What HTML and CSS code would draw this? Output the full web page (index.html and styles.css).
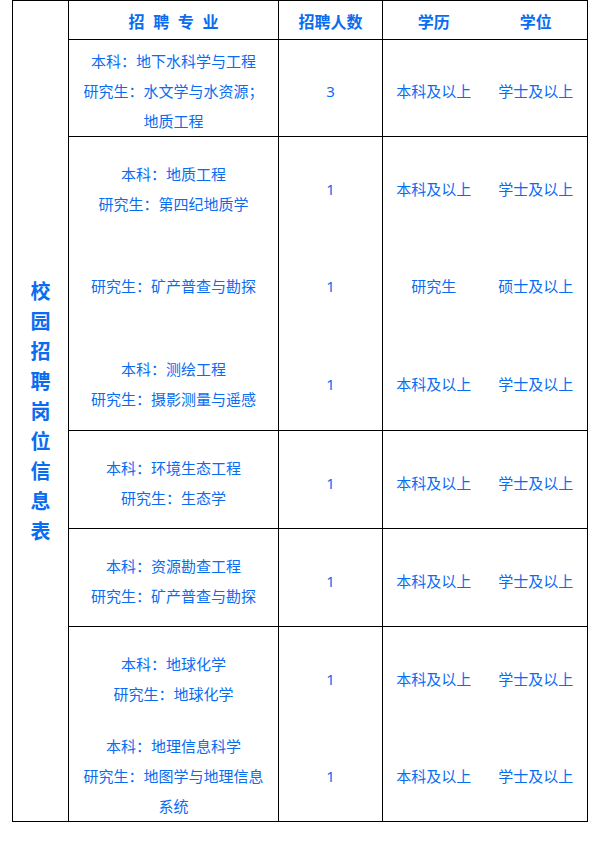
FILE: index.html
```html
<!DOCTYPE html>
<html lang="zh-CN">
<head>
<meta charset="utf-8">
<title>校园招聘岗位信息表</title>
<link rel="stylesheet" href="styles.css">
</head>
<body>
<table class="jobs">
  <colgroup>
    <col class="c-side">
    <col class="c-major">
    <col class="c-num">
    <col class="c-edu">
    <col class="c-deg">
  </colgroup>
  <tr class="head">
    <td class="side" rowspan="9">
      <div class="vtitle"><span>校</span><span>园</span><span>招</span><span>聘</span><span>岗</span><span>位</span><span>信</span><span>息</span><span>表</span></div>
    </td>
    <th class="major">招&nbsp;聘&nbsp;专&nbsp;业</th>
    <th class="num">招聘人数</th>
    <th class="edu">学历</th>
    <th class="deg">学位</th>
  </tr>
  <tr class="item grp first">
    <td class="major">本科：地下水科学与工程<br>研究生：水文学与水资源；<br>地质工程</td>
    <td class="num">3</td>
    <td class="edu">本科及以上</td>
    <td class="deg">学士及以上</td>
  </tr>
  <tr class="item grp">
    <td class="major">本科：地质工程<br>研究生：第四纪地质学</td>
    <td class="num">1</td>
    <td class="edu">本科及以上</td>
    <td class="deg">学士及以上</td>
  </tr>
  <tr class="item">
    <td class="major">研究生：矿产普查与勘探</td>
    <td class="num">1</td>
    <td class="edu">研究生</td>
    <td class="deg">硕士及以上</td>
  </tr>
  <tr class="item">
    <td class="major">本科：测绘工程<br>研究生：摄影测量与遥感</td>
    <td class="num">1</td>
    <td class="edu">本科及以上</td>
    <td class="deg">学士及以上</td>
  </tr>
  <tr class="item grp">
    <td class="major">本科：环境生态工程<br>研究生：生态学</td>
    <td class="num">1</td>
    <td class="edu">本科及以上</td>
    <td class="deg">学士及以上</td>
  </tr>
  <tr class="item grp">
    <td class="major">本科：资源勘查工程<br>研究生：矿产普查与勘探</td>
    <td class="num">1</td>
    <td class="edu">本科及以上</td>
    <td class="deg">学士及以上</td>
  </tr>
  <tr class="item grp">
    <td class="major">本科：地球化学<br>研究生：地球化学</td>
    <td class="num">1</td>
    <td class="edu">本科及以上</td>
    <td class="deg">学士及以上</td>
  </tr>
  <tr class="item last">
    <td class="major">本科：地理信息科学<br>研究生：地图学与地理信息<br>系统</td>
    <td class="num">1</td>
    <td class="edu">本科及以上</td>
    <td class="deg">学士及以上</td>
  </tr>
</table>
</body>
</html>
```
FILE: styles.css
```css
html, body {
  margin: 0;
  padding: 0;
  background: #ffffff;
}

body {
  font-family: "Noto Sans CJK SC", "Noto Sans", sans-serif;
  color: #0a6cf0;
}

.jobs {
  margin-left: 12px;
  border-collapse: collapse;
  table-layout: fixed;
  width: 575px;
  border: 1px solid #000;
}

.c-side { width: 56px; }
.c-major { width: 210px; }
.c-num { width: 104px; }
.c-edu { width: 102px; }
.c-deg { width: 103px; }

.jobs td, .jobs th {
  padding: 0;
  text-align: center;
  vertical-align: middle;
}

.side {
  border-right: 1px solid #000;
}

.vtitle {
  display: flex;
  flex-direction: column;
  align-items: center;
  font-size: 20px;
  font-weight: 700;
  line-height: 30px;
}

.vtitle span {
  display: block;
}

.head th {
  height: 36px;
  font-size: 16px;
  font-weight: 700;
  line-height: 20px;
  padding-top: 2px;
  border-bottom: 1px solid #000;
}

.major {
  border-right: 1px solid #000;
}

.num {
  border-right: 1px solid #000;
}

.head .major {
  word-spacing: 5px;
}

.item td {
  height: 92px;
  font-size: 15px;
  line-height: 30px;
  padding-top: 6px;
}

.item.grp td {
  height: 91px;
  border-top: 1px solid #000;
}

.item.grp.first td {
  height: 90px;
}

.item .num {
  font-family: "Noto Sans", "Noto Sans CJK SC", sans-serif;
}

.item.last td {
  height: 91px;
}
```
